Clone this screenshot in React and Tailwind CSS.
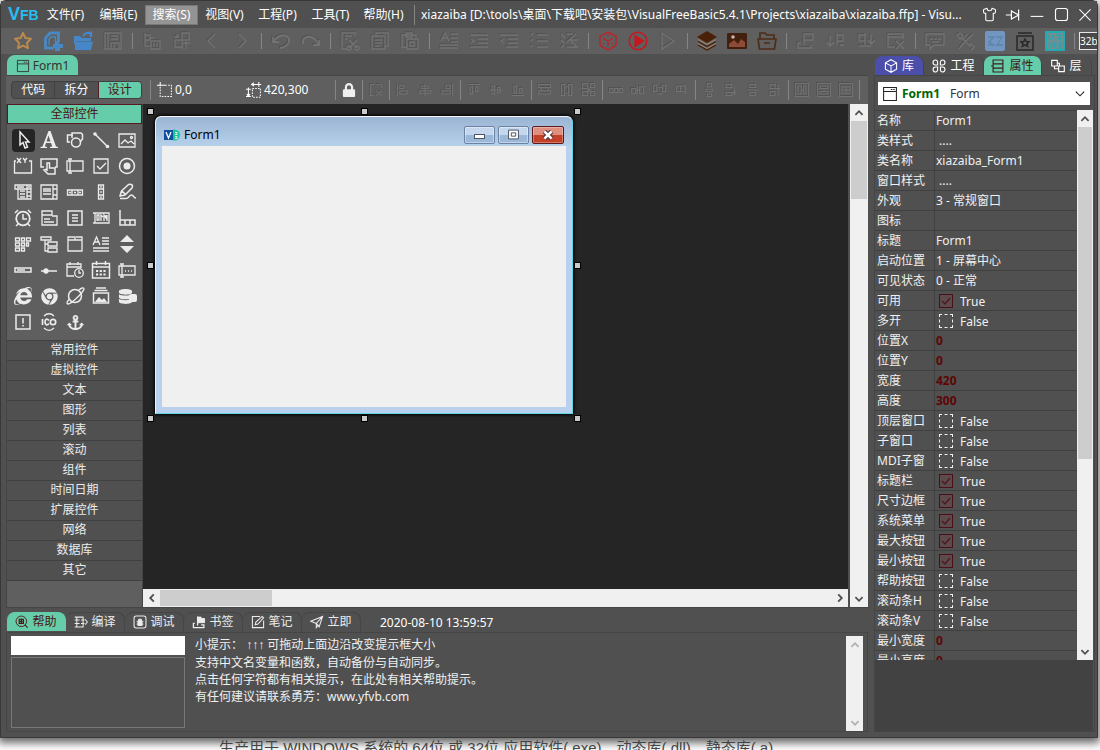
import React, { useState } from 'react';
import { FaAnchor, FaChrome, FaDatabase, FaInternetExplorer, FaLock } from 'react-icons/fa';
import { LuShirt } from 'react-icons/lu';

const MENUS = ['文件(F)', '编辑(E)', '搜索(S)', '视图(V)', '工程(P)', '工具(T)', '帮助(H)'];

const CATEGORIES = ['常用控件', '虚拟控件', '文本', '图形', '列表', '滚动', '组件', '时间日期', '扩展控件', '网络', '数据库', '其它'];

const PROPERTIES = [
    { name: '名称', value: 'Form1' },
    { name: '类样式', value: ' ....' },
    { name: '类名称', value: 'xiazaiba_Form1' },
    { name: '窗口样式', value: ' ....' },
    { name: '外观', value: '3 - 常规窗口' },
    { name: '图标', value: '' },
    { name: '标题', value: 'Form1' },
    { name: '启动位置', value: '1 - 屏幕中心' },
    { name: '可见状态', value: '0 - 正常' },
    { name: '可用', value: true },
    { name: '多开', value: false },
    { name: '位置X', value: 0 },
    { name: '位置Y', value: 0 },
    { name: '宽度', value: 420 },
    { name: '高度', value: 300 },
    { name: '顶层窗口', value: false },
    { name: '子窗口', value: false },
    { name: 'MDI子窗', value: false },
    { name: '标题栏', value: true },
    { name: '尺寸边框', value: true },
    { name: '系统菜单', value: true },
    { name: '最大按钮', value: true },
    { name: '最小按钮', value: true },
    { name: '帮助按钮', value: false },
    { name: '滚动条H', value: false },
    { name: '滚动条V', value: false },
    { name: '最小宽度', value: 0 },
    { name: '最小高度', value: 0 },
];

// all hand drawn icons share a 20x20 grid
function Icon({ size = 20, children, className = '' }) {
    return (
        <svg width={size} height={size} viewBox="0 0 20 20" fill="none" stroke="currentColor" strokeWidth="1.3" className={`shrink-0 ${className}`} aria-hidden="true">
            {children}
        </svg>
    );
}

const WindowGlyph = ({ size = 16 }) => (
    <Icon size={size}><path d="M2 2h16v16H2zM2 7h16M11 4.500h2M14 4.500h2" /></Icon>
);

// main toolbar, one array per separated group
const TOOLBAR = [
    [
        { id: '收藏', color: 'text-[#b98a4b]', art: <path strokeWidth="2" strokeLinejoin="round" d="M10 2l2.400 5 5.600.800-4 3.900 1 5.500-5-2.600-5 2.600 1-5.500-4-3.900 5.600-.800z" /> },
        { id: '新建', color: 'text-[#4a88c2]', art: <><path strokeWidth="2.800" d="M11 17H2.500V7L7 2h8.500v9" /><path strokeWidth="1.300" d="M6 14V8.500L8 6h4.500v6" /><path fill="currentColor" stroke="none" d="M12 10h4v3h4v4h-3v3h-5v-3h-2v-4h2z" /></> },
        { id: '打开', color: 'text-[#4587c8]', art: <><path fill="currentColor" stroke="none" d="M1 5h6l2 2h9v3H3L1 14zM2 10.500h18L18 19H2z" /><path strokeWidth="2.200" d="M10 5c2-3 5-4 8-2M18 .500V6" /></> },
        { id: '保存', art: <path d="M2 2h16v16H2zM5 2v16M8 5h7M8 8h7M8 18v-6h8v6M11 14v3" /> },
    ],
    [
        { id: '代码块', art: <path d="M3 2v13h5M3 4h5v5H3M8 7h4M9 10h9v8H9zM12 12v4M15 12v4" /> },
        { id: '替换', art: <path d="M10 2h7v7h-7zM3 9h7v7H3zM2 6h5M5 3v4M11 12h7M14 10v8M10 13v5" /> },
        { id: '后退', art: <path d="M13 3l-7 7 7 7" /> },
        { id: '前进', art: <path d="M7 3l7 7-7 7" /> },
    ],
    [
        { id: '撤销', art: <path strokeWidth="1.800" d="M2 6v5h6M3 10C7 4 15 2 18 8c1 5-4 9-9 9" /> },
        { id: '重做', art: <path strokeWidth="1.800" d="M18 9v5h-6M17 13C14 6 6 3 2 9v4" /> },
    ],
    [
        { id: '剪切', art: <><path d="M15 5V2H2v16h6M5 5h7M5 8h3" /><path d="M9 9l8 8M17 9l-8 8" /><circle cx="9" cy="17" r="2" /><circle cx="17" cy="17" r="2" /></> },
        { id: '复制', art: <path d="M6 4V2h12v13h-3M2 5h13v13H2zM5 9h7M5 12h7M5 15h5" /> },
        { id: '粘贴', art: <path d="M7 16H2V4h14v3M6 2h6v4H6zM7 8h11v10H7zM10 11h4v4h-4z" /> },
    ],
    [
        { id: '格式', art: <path d="M2 10l4-8 4 8M4 7h4M12 3h7M12 7h7M12 11h7M1 14h18M1 17h18" /> },
        { id: '缩进', art: <path d="M1 4h18M9 8h10M9 12h10M1 16h18M2 8l3 2-3 2" /> },
        { id: '反缩进', art: <path d="M1 4h18M9 8h10M9 12h10M7 16h12M5 8l-3 2 3 2" /> },
        { id: '注释', art: <path d="M8 4h11M8 10h11M8 16h11M2 4l2-2M2 10l2-2M2 16l2-2" /> },
        { id: '取消注释', art: <path d="M8 3h6M8 16h11M2 3l4 4M2 9l3 3M2 17l3-3M8 11l9-8M11 9h8M12 10l6 6" /> },
    ],
    [
        { id: '编译', color: 'text-[#b5272d]', art: <path strokeWidth="1.500" d="M10 1l8 4.500v9L10 19l-8-4.500v-9zM5.500 7.500L10 10l4.500-2.500M10 10v5M10 3v2M4.500 13l1.500-1M15.500 13L14 12" /> },
        { id: '运行', color: 'text-[#c5181e]', art: <><circle cx="10" cy="10" r="8.800" strokeWidth="1.600" /><path fill="currentColor" d="M7 4.500l8.500 5.500L7 15.500z" /></> },
        { id: '继续', art: <path d="M4 2l12 8-12 8z" /> },
    ],
    [
        { id: '图层', color: 'text-[#4a2108]', art: <><path fill="currentColor" stroke="none" d="M10 0l10 6-10 6L0 6z" /><path stroke="#a08a7c" strokeWidth="1" d="M1 8.500l9 5 9-5M1 12.500l9 5 9-5" /><path d="M1 10.500l9 5 9-5M1 14l9 5 9-5" strokeWidth="1.400" /></> },
        { id: '图片', color: 'text-[#43200d]', art: <><rect x="0" y="2" width="20" height="16" rx="1" fill="currentColor" stroke="none" /><path fill="#8d4b38" stroke="none" d="M2 13l5-4 4 4 3-5 4 3v5H2z" /><circle cx="6" cy="6" r="1.800" fill="#c9b8ac" stroke="none" /></> },
        { id: '文件夹', color: 'text-[#4e2c17]', art: <path strokeWidth="1.700" d="M3 8V2h5l2 2h7v4M1 8h18l-1.500 10h-15zM7 12h6" /> },
    ],
    [
        { id: '书签', art: <path d="M8 2v12M8 3h9v6H8M5 12H2v5h13v-3" /> },
        { id: '上一书签', art: <path d="M11 2v12M11 4h6v6h-6M4 5v9M1 11l3 4 4-4M14 14h4" /> },
        { id: '下一书签', art: <path d="M9 2v12M9 4H3v6h6M15 3v9M12 9l3 4 4-4M3 15h12" /> },
        { id: '清除书签', art: <path d="M9 16H2V3h15v5M2 6h15M10 10l8 8M18 10l-8 8" /> },
    ],
    [
        { id: '消息', art: <path d="M1 3h18v11H9l-4 4v-4H1zM5 8h3M9 8h3M13 8h3M7 11h7" /> },
        { id: '工具', art: <path d="M2 4l3-2 3 3-3 3zM7 7l9 9M18 3l-5 5-6 6-3 4M12 3l-3 5M15 12l4 4-3 3" /> },
        { id: '翻译', color: 'text-[#7197c0]', art: <><rect x="0" y="0" width="20" height="20" rx="2" fill="currentColor" stroke="none" /><path stroke="#5e83ad" d="M3 6h6l-5 5 5 3H3M11 6h6l-5 8h6" /></> },
        { id: '收藏窗口', color: 'text-[#292929]', art: <path strokeWidth="1.500" d="M2 5h16v14H2zM3 2h14M10 8l1.200 2.500 2.800.300-2 1.800.600 2.700-2.600-1.400-2.600 1.400.600-2.700-2-1.800 2.800-.300z" /> },
        { id: 'VFB', color: 'text-[#24a8b1]', art: <><rect x="1" y="1" width="18" height="18" fill="#6f8f92" strokeWidth="2" /><path strokeWidth="1.300" d="M4 4v3l2 2 2-2V4M11 4h4v4M13 8h3v2M4 12l1.500 4L7 12M9 12v5M9 12h3M9 14h2M14 12h2v2h-2v3h3" /></> },
    ],
];

const ALIGN_TOOLS = [
    [<path d="M3 3h5M3 3v14h4M16 3h-5M10 11l7 6M17 11l-7 6M17 3v4" />],
    [
        <path d="M3 2v16M6 4h5v4H6zM6 11h9v4H6z" />,
        <path d="M10 2v16M6 5h8v3H6zM3 11h14v3H3z" />,
        <path d="M17 2v16M9 4h5v4H9zM4 11h10v4H4z" />,
    ],
    [
        <path d="M2 3h16M5 6h3v9H5zM12 6h3v6h-3z" />,
        <path d="M2 10h16M5 5h3v10H5zM12 7h3v6h-3z" />,
        <path d="M2 17h16M5 5h3v9H5zM12 8h3v6h-3z" />,
    ],
    [
        <path d="M2 3h15v4H2zM2 11h15v4H2zM5 7v4M14 7v4" />,
        <path d="M3 3h4v14H3zM12 3h4v14h-4zM8 6h3M8 14h3" />,
        <path d="M2 2h6v6H2zM12 2h5v5h-5zM2 12h6v5H2zM12 12h5v5h-5zM7 10h6M10 7v6" />,
    ],
    [
        <path d="M2 8h4v5H2zM8 8h4v5H8zM14 8h4v5h-4z" />,
        <path d="M2 8h5v6H2zM12 6h5v8h-5zM7 10h5M9 4v12" />,
        <path d="M2 4h4v8H2zM13 4h4v8h-4zM6 15h7M8 7h4" />,
        <path d="M3 5h5v7H3zM8 5h6v7H8zM14 3v12" />,
    ],
    [
        <path d="M8 2h5v4H8zM6 9h8v3H6zM8 15h5v3H8z" />,
        <path d="M4 3h7v4H4zM4 13h7v4H4zM14 6v9M12 12l2 3 2-3" />,
        <path d="M6 3h7v4H6zM6 13h7v4H6zM3 10h14" />,
        <path d="M4 3h6v5H4zM4 12h6v5H4zM14 3v14M10 8h7" />,
    ],
    [
        <path d="M2 2h16v16H2zM5 5h4v10H5zM12 5h3v10h-3zM9 10h3" />,
        <path d="M2 2h16v16H2zM5 5h10v3H5zM5 12h10v3H5zM10 8v4" />,
        <path d="M2 2h16v16H2zM5 6h10v8H5zM5 10h10M10 6v8" />,
    ],
];

// toolbox icons in reading order, five per row
const TOOLBOX = [
    { id: '指针', art: <path strokeWidth="1.500" d="M7 2v13l3-2.500L12 18l2.500-1-2-5H16z" /> },
    { id: 'Label', art: <path fill="currentColor" stroke="none" fillRule="evenodd" d="M9.500 1h2l5.500 15.500 2 .500V18h-8v-1l2.200-.500-1.100-3.500H7L5.800 16.500 8 17v1H1.500v-1l2-.500zM9.500 5.500l-2 6h4z" /> },
    { id: 'Shape', art: <><circle cx="11" cy="12.500" r="4.500" strokeWidth="1.500" /><path strokeWidth="1.500" d="M5 12H2.500V5H8M7 8V3h9l1.500 1.500V9L15 12" /></> },
    { id: 'Line', art: <><path d="M4 4l13 13" strokeWidth="1.500" /><circle cx="4" cy="4" r="1.800" fill="currentColor" stroke="none" /><circle cx="16.500" cy="16.500" r="1.800" fill="currentColor" stroke="none" /></> },
    { id: 'Picture', art: <><path d="M2 4h16v13H2zM4 14l4-4 3 3 3-2 3 3" /><circle cx="14.500" cy="7.500" r="1" /></> },
    { id: 'Frame', art: <path d="M3 5H1.500v12h17V5H16M4 2l4 5M8 2L4 7M10 2l2 2.500L14 2M12 4.500V7" /> },
    { id: 'Button', art: <path strokeWidth="1.500" d="M5 11H2V3h16v8h-2M8 15V7h2.500v5H16v6H9l-4-4 3-1" /> },
    { id: 'TextBox', art: <path d="M5 5h13v10H5M5 5H2v10h3M5 3v14M3 3h4M3 17h4" /> },
    { id: 'CheckBox', art: <path d="M3 3h14v14H3zM6 10l3 3 6-6" /> },
    { id: 'Option', art: <><circle cx="10" cy="10" r="7.500" strokeWidth="1.500" /><circle cx="10" cy="10" r="3.500" fill="currentColor" stroke="none" /></> },
    { id: 'ComboBox', art: <path d="M2 3h16v4H2zM5 7v10h13V7M14 7v10M14 10h4M14 14h4M7 9h5M7 12h5M7 15h5M14 3v4M15 5h2M4 5h7" /> },
    { id: 'ListBox', art: <path d="M2 3h16v14H2zM14 3v14M14 7h4M14 13h4M4 7h8M4 9h8M4 12h8" /> },
    { id: 'HScroll', art: <path d="M2.500 8h15v5h-15zM7 8v5M13 8v5M4 10.500h2M14 10.500h2M9 10.500h2" /> },
    { id: 'VScroll', art: <path d="M7.500 3h5v14h-5zM7.500 7h5M7.500 13h5M10 4v2M10 14v2M10 9v2" /> },
    { id: 'Draw', art: <path strokeWidth="1.600" strokeLinejoin="round" d="M3 14l1.500-5 7-6.500c3-1 5 1 3.500 3.500L8 13zM5 9l3 3M3 16.500h6c3 0 3-3.500 5.500-3.500s1.500 3 4.500 3" /> },
    { id: 'Timer', art: <><circle cx="10" cy="10.500" r="6.800" strokeWidth="1.800" /><path strokeWidth="1.500" d="M10 6v5h4M2 5l3-3M15 2l3 3M5 16l-2 2M15 16l2 2" /></> },
    { id: 'Menu', art: <path d="M3 3h10v4H3zM3 7v10h15V8h-5M5 11h6M5 14h10" /> },
    { id: 'Rich', art: <path strokeWidth="1.500" d="M3 3h14v14H3zM7 7h6M7 10h6M7 13h6" /> },
    { id: 'Hot', art: <path d="M4 5h14v10H4M2 5h2v10H2M6 7h2v5H6zM10 13V7l2 2M13 13V7l2 3V7M16 7v6" /> },
    { id: 'Status', art: <path strokeWidth="1.500" d="M3 2v15h15v-5H3M8 12v5M13 12v5" /> },
    { id: 'ListView', art: <path d="M2.500 4h4v3h-4zM8.500 4h3v3h-3zM13.500 4h4v3h-4zM2.500 9h4v3h-4zM8.500 9h3v3h-3zM13.500 9h2v3h-2zM2.500 14h4v3h-4zM8.500 14h3v3h-3z" /> },
    { id: 'TreeView', art: <path d="M2 3h10v3H2zM6 6v11h3M6 10h3M9 8h9v4H9zM9 14h9v4H9z" /> },
    { id: 'Tab', art: <path d="M3 6h14v11H3zM3 6V3h7v3M11 3h6v3" /> },
    { id: 'TextFormat', art: <path d="M2 11l3.500-8L9 11M3.500 8h4M11 4h7M11 7h7M11 10h7M2 14h16M2 17h16" /> },
    { id: 'UpDown', art: <path fill="currentColor" stroke="none" d="M10 1l7 7H3zM10 19l7-7H3z" /> },
    { id: 'Progress', art: <path strokeWidth="1.500" d="M2 8h16v4H2zM4 10h8" /> },
    { id: 'Slider', art: <><path strokeWidth="1.500" d="M2 11h16" /><circle cx="7" cy="11" r="2" fill="currentColor" /></> },
    { id: 'DateTime', art: <><path d="M9 16H2V4h14v4M2 7h14M5 2v3M13 2v3" /><circle cx="14" cy="13" r="4.300" /><path d="M14 10v3h2" /></> },
    { id: 'Calendar', art: <><path strokeWidth="1.500" d="M1.500 3.500h17V18h-17zM2 7h16M5.500 1v4M14.500 1v4" /><path strokeWidth="2.200" strokeDasharray="2.200 1.500" d="M5 11h10M5 14.500h10" /></> },
    { id: 'IPAddress', art: <path d="M5 6h13v9H5M5 6H2v9h3M5 4v13M3 4h4M3 17h4M8 11h1M11 11h1M14 11h1" /> },
    { id: 'WebBrowser', art: <FaInternetExplorer size={18} /> },
    { id: 'Chrome', art: <FaChrome size={17} /> },
    { id: 'Inet', art: <><circle cx="10" cy="10" r="6.500" strokeWidth="1.500" /><path strokeWidth="1.300" d="M4.500 13c-3 3-3 5-1.500 5 3 0 15-11 16-15 0-2-3-1-5 1" /></> },
    { id: 'ImageList', art: <><path d="M2.500 7h15v10h-15zM3.500 4.500h13M5 2h10" strokeWidth="1.500" /><path fill="currentColor" stroke="none" d="M4 16l4-5 3 3 2-2 3 4z" /></> },
    { id: 'Database', art: <><FaDatabase size={15} /><span className="-ml-1 mt-1 h-2 w-2 rounded-xs bg-[#ececec]" /></> },
    { id: 'Alert', art: <path strokeWidth="1.500" d="M3 3h14v14H3zM10 6v5.500M10 13v1.500" /> },
    { id: 'ICO', art: <><path d="M5 4c3-3 7-3 10 0M5 16c3 3 7 3 10 0" /><path strokeWidth="1.700" d="M3.500 7v6M10 8.500C8 6 6 7 6 10s2 4 4 1.500" /><circle cx="14" cy="10" r="2.700" strokeWidth="1.700" /></> },
    { id: 'Anchor', art: <FaAnchor size={17} /> },
];

const PACKAGED = ['WebBrowser', 'Chrome', 'Database', 'Anchor'];

const EMBOSSED = 'text-[#737373] drop-shadow-[-1px_-1px_0_#525252]';

function Divider({ className = '' }) {
    return <span className={`w-px shrink-0 bg-[#858585] ${className}`} />;
}

function Chevron({ dir }) {
    const paths = {
        up: 'M4 13l6-6 6 6',
        down: 'M4 7l6 6 6-6',
        left: 'M13 4l-6 6 6 6',
        right: 'M7 4l6 6-6 6',
    };
    return <Icon size={12}><path strokeWidth="3" d={paths[dir]} /></Icon>;
}

function ScrollBar({ horizontal = false, size = 'w-4', thumb = '', muted = false }) {
    const tint = muted ? 'text-[#b0b0b0]' : 'text-[#505050]';
    return (
        <div className={`flex shrink-0 justify-between bg-[#f0f0f0] ${tint} ${size} ${horizontal ? 'flex-row' : 'flex-col'}`}>
            <div className={`flex ${horizontal ? 'flex-row' : 'flex-col'}`}>
                <button aria-label={horizontal ? '向左' : '向上'} className={`flex items-center justify-center ${horizontal ? 'w-[17px]' : 'h-[17px]'}`}>
                    <Chevron dir={horizontal ? 'left' : 'up'} />
                </button>
                {thumb && <div className={`bg-[#cdcdcd] ${horizontal ? 'my-px' : 'mx-px'} ${thumb}`} />}
            </div>
            <button aria-label={horizontal ? '向右' : '向下'} className={`flex items-center justify-center ${horizontal ? 'w-[17px]' : 'h-[17px]'}`}>
                <Chevron dir={horizontal ? 'right' : 'down'} />
            </button>
        </div>
    );
}

function TitleBar() {
    return (
        <header className="flex h-[27px] shrink-0 items-center bg-[#505050] pl-[7px]">
            <div className="flex w-[31px] items-baseline font-['Liberation_Sans'] font-bold text-[#27bdf0]">
                <span className="text-lg leading-5">V</span>
                <span className="text-sm leading-5">FB</span>
            </div>
            <nav className="flex shrink-0">
                {MENUS.map((m, i) => (
                    <button key={m} className={`h-5 w-[53px] border text-center whitespace-nowrap ${i === 2 ? 'border-[#777777] bg-[#949494]' : 'border-transparent'}`}>{m}</button>
                ))}
            </nav>
            <Divider className="mx-1 h-5" />
            <h1 className="min-w-0 flex-1 truncate pl-[2px]">
                xiazaiba [D:\tools\桌面\下载吧\安装包\VisualFreeBasic5.4.1\Projects\xiazaiba\xiazaiba.ffp] - Visu...
            </h1>
            <div className="flex shrink-0 items-center">
                <button aria-label="皮肤" className="flex w-6 justify-center"><LuShirt size={15} strokeWidth={1.7} /></button>
                <button aria-label="置顶" className="flex w-6 justify-center">
                    <Icon size={16}><path strokeWidth="1.500" d="M1 10h7M8 4v12M8 5l9 5-9 5M17 3v14" /></Icon>
                </button>
                <button aria-label="最小化" className="flex w-6 justify-center"><Icon size={14}><path strokeWidth="1.500" d="M1 12h18" /></Icon></button>
                <button aria-label="最大化" className="flex w-6 justify-center"><Icon size={15}><rect x="2" y="2" width="16" height="16" rx="3" strokeWidth="1.500" /></Icon></button>
                <button aria-label="关闭" className="flex w-6 justify-center"><Icon size={14}><path strokeWidth="1.500" d="M2 2l16 16M18 2L2 18" /></Icon></button>
            </div>
        </header>
    );
}

function MainToolbar() {
    return (
        <div className="flex h-[26px] shrink-0 items-center overflow-hidden bg-[#5f5f5f] pl-[7px]">
            {TOOLBAR.map((group, g) => (
                <React.Fragment key={g}>
                    {group.map(tool => (
                        <button key={tool.id} aria-label={tool.id} className="flex w-[30px] shrink-0 justify-center">
                            <Icon size={20} className={tool.color || EMBOSSED}>{tool.art}</Icon>
                        </button>
                    ))}
                    <Divider className="mx-1 h-4" />
                </React.Fragment>
            ))}
            <button className="h-[18px] flex-1 border border-r-0 border-[#e8e8e8] bg-[#4a4a4a] text-center text-[10px] leading-4">32b</button>
        </div>
    );
}

function DesignToolbar() {
    const [mode, setMode] = useState('设计');
    return (
        <div className="flex h-[29px] shrink-0 items-center overflow-hidden border-t border-[#454545] bg-[#5f5f5f] pb-px pl-[5px]">
            <div className="flex h-[18px] w-[131px] shrink-0 overflow-hidden rounded border border-[#404040] bg-[#505050]">
                {['代码', '拆分', '设计'].map(m => (
                    <button
                        key={m}
                        onClick={() => setMode(m)}
                        className={`flex-1 border-l leading-4 first:border-l-0 ${mode === m ? 'border-[#5a1a22] bg-[#66cdaa] text-[#4b1414]' : 'border-[#404040]'}`}
                    >
                        {m}
                    </button>
                ))}
            </div>
            <Divider className="mr-[6px] ml-2 h-5" />
            <div className="flex w-[89px] shrink-0 items-center gap-[2px]">
                <Icon size={16}><path d="M0 4h12M4 0v5" /><path strokeDasharray="2 1.500" d="M4 6v12h14V4h-4" /></Icon>
                <span>0,0</span>
            </div>
            <div className="flex w-[89px] shrink-0 items-center gap-[2px]">
                <Icon size={16}><path d="M7 3h12M16 0v6M3 7v11M0 9h6M0 18h6M1 15l2 3 2-3M10 1L7 3l3 2" /><path strokeDasharray="2 1.500" d="M8 8h10v11H8z" /></Icon>
                <span>420,300</span>
            </div>
            <Divider className="mr-[5px] h-5" />
            <button aria-label="锁定" className="flex w-4 shrink-0 justify-center text-[#efefef]"><FaLock size={14} /></button>
            <Divider className="ml-[5px] h-5" />
            <div className="flex items-center pl-[2px]">
                {ALIGN_TOOLS.map((group, g) => (
                    <React.Fragment key={g}>
                        {group.map((art, i) => (
                            <button key={i} aria-label={`对齐 ${g + 1}-${i + 1}`} className="flex w-[22px] shrink-0 justify-center">
                                <Icon size={16} className={EMBOSSED}>{art}</Icon>
                            </button>
                        ))}
                        <Divider className="mx-[2px] h-5" />
                    </React.Fragment>
                ))}
            </div>
        </div>
    );
}

function Toolbox() {
    return (
        <aside className="flex w-[137px] shrink-0 flex-col border-x border-[#454545] bg-[#5f5f5f]">
            <button className="h-5 shrink-0 border border-[#5a1a22] bg-[#66cdaa] leading-4 text-[#4b1414]">全部控件</button>
            <div className="grid shrink-0 grid-cols-[repeat(5,26px)] px-[3px] pt-[3px] pb-[5px] text-[#ececec]">
                {TOOLBOX.map((tool, i) => (
                    <button key={tool.id} aria-label={tool.id} className="flex h-[26px] items-center justify-center">
                        <span className={`flex h-[23px] w-[23px] items-center justify-center rounded ${i === 0 ? 'bg-[#252525]' : ''}`}>
                            {PACKAGED.includes(tool.id) ? tool.art : <Icon size={20}>{tool.art}</Icon>}
                        </span>
                    </button>
                ))}
            </div>
            <div className="flex flex-col border-t border-[#404040]">
                {CATEGORIES.map(c => (
                    <button key={c} className="h-5 border-b border-[#404040] bg-[#505050] pb-[2px] leading-4 text-[#ececec]">{c}</button>
                ))}
            </div>
        </aside>
    );
}

function FormDesigner() {
    const handles = [
        'top-0 left-0', 'top-0 left-[calc(50%-3px)]', 'top-0 right-0',
        'top-[calc(50%-3px)] left-0', 'top-[calc(50%-3px)] right-0',
        'bottom-0 left-0', 'bottom-0 left-[calc(50%-3px)]', 'bottom-0 right-0',
    ];
    return (
        <div className="min-h-0 flex-1 overflow-hidden bg-[#252525] pt-1 pl-1">
            <div className="relative h-[314px] w-[434px] p-2">
                {handles.map(h => (
                    <span key={h} className={`absolute h-[7px] w-[7px] border border-black bg-[#cacaca] ${h}`} />
                ))}
                <div className="flex h-full flex-col rounded-t-md border border-t-[#f4f8fc] border-r-[#62d5e4] border-b-[#62d5e4] border-l-[#e8f4fb] bg-[#b9d1ee] px-[6px] pb-[6px] text-black shadow-[0_0_3px_1px_#000]">
                    <div className="-mx-[6px] flex h-[29px] shrink-0 items-center rounded-t-md bg-linear-to-b from-[#9ab5d3] to-[#b7d0ea] px-2 pt-[6px]">
                        <svg width="16" height="14" viewBox="0 0 16 14" className="shrink-0" aria-hidden="true">
                            <circle cx="10.500" cy="7" r="5.500" fill="#1fc39a" />
                            <rect x="0" y="2" width="9" height="10" fill="#124f9c" />
                            <path d="M2 4l2.500 6L7 4" stroke="#fff" strokeWidth="1.300" fill="none" />
                            <path d="M11 4.500h2v2h-2M11 8.500h2v2h-2" stroke="#fff" strokeWidth=".800" fill="none" />
                        </svg>
                        <span className="flex-1 pl-1 text-xs">Form1</span>
                        <div className="flex gap-[3px]">
                            <button aria-label="最小化窗体" className="flex h-[18px] w-[31px] items-center justify-center rounded-xs border border-[#6a83a5] bg-linear-to-b from-[#c5d7ec] from-50% to-[#9cb8d9] to-50% inset-ring inset-ring-white/40">
                                <span className="mt-1 h-[5px] w-[11px] border border-[#4c5464] bg-white" />
                            </button>
                            <button aria-label="最大化窗体" className="flex h-[18px] w-[31px] items-center justify-center rounded-xs border border-[#6a83a5] bg-linear-to-b from-[#c5d7ec] from-50% to-[#9cb8d9] to-50% inset-ring inset-ring-white/40">
                                <Icon size={11}><path fill="#fff" stroke="#4c5464" strokeWidth="1.800" d="M1 2h18v16H1zM6 7h8v6H6z" /></Icon>
                            </button>
                            <button aria-label="关闭窗体" className="flex h-[18px] w-8 items-center justify-center rounded-xs border border-[#5b1a1d] bg-linear-to-b from-[#df8f80] from-50% to-[#c34227] to-50% inset-ring inset-ring-white/30">
                                <Icon size={12}><path stroke="#4c3038" strokeWidth="8" d="M4 4l12 12M16 4L4 16" /><path stroke="#fff" strokeWidth="4.500" d="M4 4l12 12M16 4L4 16" /></Icon>
                            </button>
                        </div>
                    </div>
                    <div className="flex-1 bg-[#f0f0f0]" />
                </div>
            </div>
        </div>
    );
}

const BOTTOM_TABS = [
    { name: '帮助', art: <><circle cx="9" cy="9" r="7.500" /><path strokeWidth="1.600" d="M14 14l4 4M6 6h6v6H6zM9 5v8M6 9h6" /></> },
    { name: '编译', art: <path strokeWidth="1.500" d="M4 3h9v14H4M1 3h5M1 7h7M1 12h7M1 17h5M4 3v14M10 7h5M10 12h5M16 6l3 4-3 4" /> },
    { name: '调试', art: <><rect x="1.500" y="1.500" width="17" height="17" rx="3" strokeWidth="1.500" /><path fill="currentColor" d="M7 9h6v6H7zM8 6h4v3H8z" /><path d="M5 9h2M5 13h2M13 9h2M13 13h2" /></> },
    { name: '书签', art: <><path strokeWidth="1.800" d="M8 2v13M4 12H2v6h15v-4h-4" /><path fill="currentColor" d="M8 3h5v2h5v6H8z" /></> },
    { name: '笔记', art: <path strokeWidth="1.500" d="M13 2H2v16h16V8M6 14l1-4 9-8 2 2-8 9z" /> },
    { name: '立即', art: <path strokeWidth="1.500" d="M1 9l17-7-5 15-4-5zM18 2L9 12v6l3-4" /> },
];

function BottomTabs() {
    const [active, setActive] = useState('帮助');
    return (
        <div className="flex h-[25px] shrink-0 items-end border-t border-[#454545] pb-px pl-px">
            {BOTTOM_TABS.map(tab => (
                <button
                    key={tab.name}
                    onClick={() => setActive(tab.name)}
                    className={`flex h-[19px] w-[59px] shrink-0 items-center justify-center gap-[3px] rounded-t-lg border-t border-r leading-4 ${active === tab.name ? 'border-[#66cdaa] bg-[#66cdaa] text-[#4b1414]' : 'border-[#454545] text-[#ececec]'}`}
                >
                    <Icon size={14}>{tab.art}</Icon>
                    {tab.name}
                </button>
            ))}
            <time className="ml-[19px] leading-[17px]">2020-08-10 13:59:57</time>
        </div>
    );
}

function HelpPanel() {
    return (
        <section className="flex h-[100px] shrink-0 border border-[#454545] pt-[3px] pr-1 pl-1">
            <div className="flex w-[174px] shrink-0 flex-col gap-[2px] pb-[3px]">
                <input aria-label="查找帮助" className="h-[19px] bg-white px-1 text-black outline-none" />
                <div className="flex-1 border border-[#777777]" />
            </div>
            <div className="min-w-0 flex-1 pl-[10px] leading-[17px] text-[#f0f0f0]">
                <p>小提示： <span className="font-['Liberation_Sans']">↑↑↑</span> 可拖动上面边沿改变提示框大小</p>
                <p>支持中文名变量和函数，自动备份与自动同步。</p>
                <p>点击任何字符都有相关提示，在此处有相关帮助提示。</p>
                <p>有任何建议请联系勇芳：www.yfvb.com</p>
            </div>
            <ScrollBar size="w-[17px]" muted />
        </section>
    );
}

const SIDE_TABS = [
    { name: '库', width: 'w-[49px]', style: 'bg-[#4b4faa] text-white', art: <path strokeWidth="1.500" d="M10 1l8 4.500v9L10 19l-8-4.500v-9zM2 5.500l8 4.500 8-4.500M10 10v9" /> },
    { name: '工程', width: 'w-[60px]', style: 'text-white', art: <path strokeWidth="1.600" d="M5 1.500a3.500 3.500 0 100 7h3V5a3 3 0 00-3-3.500zM15 1.500a3.500 3.500 0 110 7h-3V5a3 3 0 013-3.500zM5 18.500a3.500 3.500 0 110-7h3V15a3 3 0 01-3 3.500zM15 18.500a3.500 3.500 0 100-7h-3V15a3 3 0 003 3.500z" /> },
    { name: '属性', width: 'w-[58px]', style: 'bg-[#66cdaa] text-[#3d1a1a]', art: <path strokeWidth="1.600" d="M3 1.500h14v17H3zM3 7h14M3 13h14M0 10h3" /> },
    { name: '层', width: 'w-[50px]', style: 'text-white', art: <path strokeWidth="1.600" d="M1 2h8v8H1zM11 10h8v8h-8zM9 6h3v4M5 10v4h6" /> },
];

function PropertyValue({ name, value }) {
    if (typeof value === 'boolean') {
        return (
            <label className="relative flex h-[19px] items-center gap-[7px] pl-[3px]">
                <input
                    type="checkbox"
                    aria-label={name}
                    defaultChecked={value}
                    className="peer h-[14px] w-[14px] appearance-none border border-dashed border-[#f0f0f0] checked:border-solid checked:border-[#4a1019] checked:bg-[#5d4a4b]"
                />
                <svg width="10" height="10" viewBox="0 0 10 10" className="pointer-events-none absolute top-[5px] left-[5px] opacity-0 peer-checked:opacity-100" fill="none" stroke="#4a1a20" strokeWidth="1.400">
                    <path d="M1 5l3 3 5-6" />
                </svg>
                <span className="pt-[2px] leading-[17px]">{value ? 'True' : 'False'}</span>
            </label>
        );
    }
    if (typeof value === 'number') {
        return <span className="font-bold text-[#5e0505]">{value}</span>;
    }
    return <span className="whitespace-pre">{value}</span>;
}

function PropertyPanel() {
    return (
        <aside className="flex w-[221px] shrink-0 flex-col">
            <div className="flex h-[21px] shrink-0 items-end pl-px">
                {SIDE_TABS.map(tab => (
                    <button key={tab.name} className={`flex h-[19px] shrink-0 items-center justify-center gap-1 rounded-t-lg border-r border-[#454545] text-xs ${tab.width} ${tab.style}`}>
                        <Icon size={14}>{tab.art}</Icon>
                        {tab.name}
                    </button>
                ))}
            </div>
            <div className="flex min-h-0 flex-1 flex-col border border-[#454545] pt-[6px] pr-px">
                <div className="mx-[3px] mb-[5px] flex h-[23px] shrink-0 items-center bg-white px-1 text-[#222]">
                    <WindowGlyph size={16} />
                    <label htmlFor="object" className="pl-1 font-bold text-[#006400]">Form1</label>
                    <select id="object" className="h-full min-w-0 flex-1 appearance-none bg-transparent pl-[10px] text-[#333] outline-none">
                        <option>Form</option>
                    </select>
                    <Icon size={12}><path strokeWidth="1.800" d="M3 6l7 7 7-7" /></Icon>
                </div>
                <div className="flex min-h-0 flex-1">
                    <div className="min-w-0 flex-1 overflow-hidden border-t border-[#404040]">
                        <table className="w-full table-fixed border-separate border-spacing-0 text-[#f0f0f0]">
                            <tbody>
                                {PROPERTIES.map(p => (
                                    <tr key={p.name}>
                                        <th scope="row" className="h-5 w-[60px] border-r border-b border-[#404040] p-0 pl-[2px] text-left leading-[19px] font-normal whitespace-nowrap">{p.name}</th>
                                        <td className="h-5 border-b border-[#404040] p-0 pl-px leading-[19px]"><PropertyValue name={p.name} value={p.value} /></td>
                                    </tr>
                                ))}
                            </tbody>
                        </table>
                    </div>
                    <ScrollBar thumb="h-[332px]" />
                </div>
                <div className="h-[71px] shrink-0 bg-[#424242]" />
            </div>
        </aside>
    );
}

export default function App() {
    return (
        <div className="flex h-screen flex-col overflow-hidden bg-white font-['Noto_Sans','Noto_Sans_CJK_SC',sans-serif] text-xs text-white">
            <div className="mr-[2px] flex min-h-0 flex-1 flex-col rounded-t-md border border-[#383838] bg-[#505050] shadow-[0_3px_8px_2px_#0009]">
                <TitleBar />
                <MainToolbar />
                <div className="flex min-h-0 flex-1 gap-[6px] pr-[2px] pb-[5px] pl-[5px]">
                    <main className="flex min-w-0 flex-1 flex-col">
                        <div className="flex h-[21px] shrink-0 items-end pl-px">
                            <button className="flex h-5 w-[71px] items-center justify-center gap-[3px] rounded-t-lg bg-[#66cdaa] pt-[2px] text-xs text-[#333]">
                                <WindowGlyph size={14} />
                                Form1
                            </button>
                        </div>
                        <DesignToolbar />
                        <div className="flex min-h-0 flex-1">
                            <Toolbox />
                            <div className="flex min-w-0 flex-1">
                                <div className="mr-[2px] flex min-w-0 flex-1 flex-col">
                                    <FormDesigner />
                                    <ScrollBar horizontal size="h-[18px]" thumb="w-28" />
                                </div>
                                <ScrollBar size="w-[18px]" thumb="h-[78px]" />
                            </div>
                        </div>
                        <BottomTabs />
                        <HelpPanel />
                    </main>
                    <PropertyPanel />
                </div>
            </div>
            <p className="h-3 shrink-0 overflow-hidden pl-[219px] font-['Liberation_Sans','Noto_Sans_CJK_SC',sans-serif] text-[15px] leading-5 whitespace-nowrap text-[#444]">
                生产用于 WINDOWS 系统的 64位 或 32位 应用软件(.exe)、动态库(.dll)、静态库(.a)
            </p>
        </div>
    );
}
